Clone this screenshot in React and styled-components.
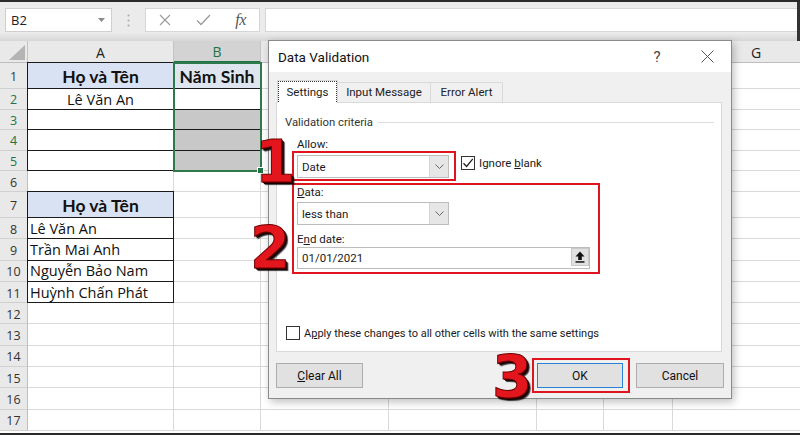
import React from 'react';
import styled, { createGlobalStyle, css } from 'styled-components';

const Global = createGlobalStyle`
  html, body { margin: 0; padding: 0; background: #fff; }
  body { width: 800px; height: 435px; overflow: hidden; font-family: "Open Sans", sans-serif; }
`;

const UI = `Roboto, "Noto Sans", sans-serif`;

const Frame = styled.div`
  position: relative;
  width: 800px;
  height: 435px;
  box-sizing: border-box;
  border-top: 2px solid #2a2a2a;
  border-bottom: 2px solid #2a2a2a;
  display: flex;
  flex-direction: column;
  overflow: hidden;
  background: #fff;
`;

/* ---------- toolbar ---------- */
const Toolbar = styled.div`
  height: 39px;
  flex: none;
  box-sizing: border-box;
  display: flex;
  align-items: flex-start;
  padding: 6px 0 0 5px;
  background: linear-gradient(#ebebeb 0, #ebebeb 31px, #d6d6d6 39px);
  border-right: 3px solid #333;
`;

const NameBox = styled.div`
  width: 107px;
  height: 24px;
  box-sizing: border-box;
  background: #fff;
  border: 1px solid #cfcfcf;
  display: flex;
  align-items: center;
  justify-content: space-between;
  padding: 0 6px 0 5px;
  font-size: 13px;
  color: #222;
`;

const Dots = styled.div`
  width: 33px;
  height: 24px;
  display: flex;
  align-items: center;
  justify-content: center;
`;

const FxBox = styled.div`
  width: 115px;
  height: 24px;
  box-sizing: border-box;
  background: #fff;
  border: 1px solid #d6d6d6;
  display: flex;
`;

const FxCell = styled.div`
  width: ${p => p.$w || 38}px;
  height: 100%;
  display: flex;
  align-items: center;
  justify-content: center;
  color: #666;
`;

const FxText = styled.span`
  font-family: "Liberation Serif", serif;
  font-style: italic;
  font-size: 16px;
  color: #555;
  letter-spacing: -0.5px;
`;

const FormulaInput = styled.div`
  flex: 1;
  height: 24px;
  margin-left: 5px;
  background: #fff;
  border: 1px solid #d6d6d6;
  border-right: none;
  box-sizing: border-box;
`;

/* ---------- sheet ---------- */
const Sheet = styled.div`
  position: relative;
  flex: 1;
  width: 840px;
  display: grid;
  grid-template-columns: 28px 146px 87px 128px 148px 67px 69px 167px;
  grid-template-rows: 22px 26px repeat(5, 20.6px) 26px repeat(11, 21.3px);
  overflow: hidden;
`;

const Corner = styled.div`
  background: #e9e9e9;
  border-right: 1px solid #c4c4c4;
  border-bottom: 1px solid #bdbdbd;
  box-sizing: border-box;
  display: flex;
  align-items: flex-end;
  justify-content: flex-end;
  padding: 0 2px 2px 0;
`;

const ColHead = styled.div`
  box-sizing: border-box;
  background: ${p => (p.$sel ? '#d3d3d3' : '#e9e9e9')};
  color: ${p => (p.$sel ? '#217346' : '#222')};
  border-right: 1px solid #c4c4c4;
  border-bottom: ${p => (p.$sel ? '2px solid #217346' : '1px solid #bdbdbd')};
  display: flex;
  align-items: center;
  justify-content: center;
  font-size: 14px;
  padding-top: 1px;
`;

const RowHead = styled.div`
  box-sizing: border-box;
  background: #e9e9e9;
  color: ${p => (p.$sel ? '#217346' : '#333')};
  border-right: 1px solid #bdbdbd;
  border-bottom: 1px solid #d0d0d0;
  display: flex;
  align-items: center;
  justify-content: center;
  font-size: 12.5px;
  padding-top: 2px;
`;

const Cell = styled.div`
  position: relative;
  box-sizing: border-box;
  border-right: 1px solid #d9d9d9;
  border-bottom: 1px solid #d9d9d9;
  background: ${p => p.$bg || '#fff'};
  font-family: ${p => (p.$bold ? 'Lato, "Open Sans", sans-serif' : '"Open Sans", sans-serif')};
  font-size: ${p => (p.$bold ? '17.5px' : '14.5px')};
  font-weight: ${p => (p.$bold ? 700 : 400)};
  line-height: 1;
  display: flex;
  align-items: center;
  justify-content: ${p => (p.$left ? 'flex-start' : 'center')};
  padding: 2px 2px 0 2px;
  color: #111;
  white-space: nowrap;
  ${p =>
    p.$boxed &&
    css`
      &::after {
        content: '';
        position: absolute;
        inset: -1px;
        border: 1px solid #1a1a1a;
        pointer-events: none;
      }
    `}
`;

const Selection = styled.div`
  position: absolute;
  left: 173px;
  top: 21px;
  width: 89px;
  height: 110px;
  box-sizing: border-box;
  border: 2px solid #2f7a4c;
  pointer-events: none;
`;

const FillHandle = styled.div`
  position: absolute;
  right: -4px;
  bottom: -4px;
  width: 5px;
  height: 5px;
  background: #217346;
  border: 1px solid #fff;
`;

/* ---------- dialog ---------- */
const Dialog = styled.div`
  position: absolute;
  left: 268px;
  top: 38px;
  width: 464px;
  height: 359px;
  box-sizing: border-box;
  border: 1px solid #8a8a8a;
  background: #f0f0f0;
  box-shadow: 2px 3px 8px rgba(0, 0, 0, 0.25);
  display: flex;
  flex-direction: column;
  font-family: ${UI};
  font-size: 11px;
  color: #1a1a1a;
`;

const TitleBar = styled.div`
  height: 31px;
  flex: none;
  background: #fff;
  display: flex;
  align-items: center;
  padding-left: 9px;
`;

const Title = styled.div`
  flex: 1;
  font-size: 13.5px;
  color: #111;
`;

const TitleBtn = styled.div`
  width: ${p => p.$w}px;
  margin-right: ${p => p.$mr || 0}px;
  height: 31px;
  display: flex;
  align-items: center;
  justify-content: center;
  color: #444;
  font-size: 15px;
`;

const Body = styled.div`
  flex: 1;
  display: flex;
  flex-direction: column;
  padding: 9px 9px 0 7px;
`;

const Tabs = styled.div`
  display: flex;
  align-items: flex-end;
  height: 22px;
  padding-left: 1px;
  position: relative;
  z-index: 1;
  margin-bottom: -1px;
`;

const Tab = styled.div`
  width: ${p => p.$w}px;
  height: ${p => (p.$active ? 23 : 21)}px;
  box-sizing: border-box;
  background: ${p => (p.$active ? '#fff' : '#f0f0f0')};
  border: 1px solid #d9d9d9;
  border-bottom: ${p => (p.$active ? 'none' : '1px solid #d9d9d9')};
  margin-left: ${p => (p.$first ? 0 : -1)}px;
  display: flex;
  align-items: center;
  justify-content: center;
  color: #222;
  padding-bottom: 1px;
  font-size: 11.5px;
`;

const FocusRect = styled.div`
  width: 100%;
  height: 100%;
  box-sizing: border-box;
  border: 1px dotted #333;
  border-bottom: none;
  display: flex;
  align-items: center;
  justify-content: center;
`;

const Panel = styled.div`
  height: 250px;
  box-sizing: border-box;
  background: #fff;
  border: 1px solid #d9d9d9;
  display: flex;
  flex-direction: column;
  padding: 12px 0 11px 0;
`;

const GroupHeader = styled.div`
  display: flex;
  align-items: center;
  padding-left: 8px;
  padding-right: 7px;
  height: 14px;
  color: #333;
  font-size: 11.3px;
`;

const GroupLine = styled.div`
  flex: 1;
  height: 1px;
  background: #dcdcdc;
  margin-left: 5px;
`;

const Group = styled.div`
  padding-left: 15px;
  margin-top: 8px;
  display: flex;
  flex-direction: column;
  align-items: flex-start;
`;

const Label = styled.div`
  height: 14px;
  line-height: 14px;
  margin-left: ${p => p.$ml ?? 5}px;
  margin-top: ${p => p.$mt || 0}px;
  color: #1a1a1a;
  font-size: 11.5px;
`;

const Row = styled.div`
  display: flex;
  align-items: flex-start;
`;

const Highlight = styled.div`
  border: 2px solid #e0141e;
  padding: ${p => p.$pad};
  width: ${p => (p.$w ? `${p.$w}px` : 'auto')};
  box-sizing: border-box;
  margin-top: ${p => p.$mt || 0}px;
  display: flex;
  flex-direction: column;
  align-items: flex-start;
`;

const Select = styled.div`
  width: ${p => p.$w}px;
  height: 23px;
  margin-top: ${p => p.$mt || 0}px;
  box-sizing: border-box;
  border: 1px solid #bcbcbc;
  background: #fff;
  display: flex;
  align-items: stretch;
  font-size: 11.5px;
`;

const SelectText = styled.div`
  flex: 1;
  display: flex;
  align-items: center;
  padding-left: 4px;
`;

const SelectBtn = styled.div`
  width: 18px;
  background: #e6e6e6;
  border-left: 1px solid #d4d4d4;
  display: flex;
  align-items: center;
  justify-content: center;
`;

const Input = styled.div`
  width: ${p => p.$w}px;
  height: 22px;
  margin-top: 1px;
  box-sizing: border-box;
  border: 1px solid #bcbcbc;
  background: #fff;
  display: flex;
  align-items: stretch;
  font-size: 11.5px;
`;

const InputText = styled.div`
  flex: 1;
  display: flex;
  align-items: center;
  padding-left: 4px;
`;

const RefBtn = styled.div`
  width: 18px;
  height: 18px;
  box-sizing: border-box;
  background: #e1e1e1;
  border: 1px solid #c8c8c8;
  display: flex;
  align-items: center;
  justify-content: center;
`;

const Check = styled.div`
  width: 14px;
  height: 14px;
  box-sizing: border-box;
  border: 1px solid #333;
  background: #fff;
  flex: none;
  display: flex;
  align-items: center;
  justify-content: center;
`;

const CheckRow = styled.label`
  display: flex;
  align-items: center;
  gap: 4px;
  margin-left: ${p => p.$ml || 0}px;
  margin-top: ${p => p.$mt || 0}px;
  font-size: ${p => p.$fs || 11.5}px;
`;

const Spacer = styled.div`
  flex: 1;
`;

const Footer = styled.div`
  display: flex;
  align-items: center;
  margin-top: 6px;
  margin-right: -2px;
  gap: 6px;
`;

const Button = styled.div`
  width: ${p => p.$w}px;
  height: 25px;
  box-sizing: border-box;
  background: #e1e1e1;
  border: 1px solid ${p => (p.$primary ? '#2a82d8' : '#adadad')};
  display: flex;
  align-items: center;
  justify-content: center;
  color: #111;
  font-size: 12px;
`;

/* ---------- annotations ---------- */
const Marker = styled.div`
  position: absolute;
  left: ${p => p.$x}px;
  top: ${p => p.$y}px;
  font-family: "DejaVu Sans", sans-serif;
  font-weight: 700;
  font-size: 58px;
  line-height: 1;
  color: #e3151d;
  -webkit-text-stroke: 1px #6a0000;
  text-shadow: 1px 1px 0 #2a0000, 2px 2px 0 #1a0000, 3px 3px 1px rgba(0, 0, 0, 0.75);
  pointer-events: none;
`;

/* ---------- icons ---------- */
const Chevron = () => (
  <svg width="9" height="5" viewBox="0 0 9 5">
    <path d="M0.5 0.5 L4.5 4.5 L8.5 0.5" stroke="#666" fill="none" />
  </svg>
);

const Tick = () => (
  <svg width="12" height="12" viewBox="0 0 12 12">
    <path d="M1.5 6.2 L4.6 9.4 L10.8 1.8" stroke="#222" strokeWidth="1.3" fill="none" />
  </svg>
);

const cols = ['A', 'B', 'C', 'D', 'E', 'F', 'G'];
const shownHeads = { A: 'A', B: 'B', G: 'G' };

const blue = '#d9e2f2';
const gray = '#c8c8c8';

const data = {
  1: { A: { t: 'Họ và Tên', bold: true, bg: blue, boxed: true }, B: { t: 'Năm Sinh', bold: true, bg: '#dfe5ef', boxed: true } },
  2: { A: { t: 'Lê Văn An', boxed: true }, B: { boxed: true } },
  3: { A: { boxed: true }, B: { boxed: true, bg: gray } },
  4: { A: { boxed: true }, B: { boxed: true, bg: gray } },
  5: { A: { boxed: true }, B: { boxed: true, bg: gray } },
  7: { A: { t: 'Họ và Tên', bold: true, bg: blue, boxed: true } },
  8: { A: { t: 'Lê Văn An', left: true, boxed: true } },
  9: { A: { t: 'Trần Mai Anh', left: true, boxed: true } },
  10: { A: { t: 'Nguyễn Bảo Nam', left: true, boxed: true } },
  11: { A: { t: 'Huỳnh Chấn Phát', left: true, boxed: true } },
};

export default function App() {
  const rows = Array.from({ length: 17 }, (_, i) => i + 1);
  return (
    <>
      <Global />
      <Frame>
        <Toolbar>
          <NameBox>
            <span>B2</span>
            <svg width="7" height="4" viewBox="0 0 7 4">
              <path d="M0 0 L7 0 L3.5 4Z" fill="#8a8a8a" />
            </svg>
          </NameBox>
          <Dots>
            <svg width="3" height="13" viewBox="0 0 3 13">
              <circle cx="1.5" cy="1.5" r="1" fill="#a8a8a8" />
              <circle cx="1.5" cy="6.5" r="1" fill="#a8a8a8" />
              <circle cx="1.5" cy="11.5" r="1" fill="#a8a8a8" />
            </svg>
          </Dots>
          <FxBox>
            <FxCell>
              <svg width="12" height="12" viewBox="0 0 12 12">
                <path d="M1 1 L11 11 M11 1 L1 11" stroke="#9a9a9a" strokeWidth="1.1" />
              </svg>
            </FxCell>
            <FxCell>
              <svg width="15" height="12" viewBox="0 0 15 12">
                <path d="M1 6.5 L5 10.5 L14 1" stroke="#9a9a9a" strokeWidth="1.3" fill="none" />
              </svg>
            </FxCell>
            <FxCell $w={37}>
              <FxText>fx</FxText>
            </FxCell>
          </FxBox>
          <FormulaInput />
        </Toolbar>

        <Sheet>
          <Corner>
            <svg width="16" height="15" viewBox="0 0 16 15">
              <path d="M16 0 L16 15 L0 15Z" fill="#b4b4b4" />
            </svg>
          </Corner>
          {cols.map(c => (
            <ColHead key={c} $sel={c === 'B'}>
              {shownHeads[c]}
            </ColHead>
          ))}
          {rows.map(r => (
            <React.Fragment key={r}>
              <RowHead $sel={r >= 2 && r <= 5}>{r}</RowHead>
              {cols.map(c => {
                const d = (data[r] && data[r][c]) || {};
                return (
                  <Cell key={c} $bg={d.bg} $bold={d.bold} $left={d.left} $boxed={d.boxed}>
                    {d.t}
                  </Cell>
                );
              })}
            </React.Fragment>
          ))}
          <Selection>
            <FillHandle />
          </Selection>
        </Sheet>

        <Dialog>
          <TitleBar>
            <Title>Data Validation</Title>
            <TitleBtn $w={30} $mr={12}>?</TitleBtn>
            <TitleBtn $w={46} $mr={1}>
              <svg width="13" height="13" viewBox="0 0 13 13">
                <path d="M0.5 0.5 L12.5 12.5 M12.5 0.5 L0.5 12.5" stroke="#555" strokeWidth="1" />
              </svg>
            </TitleBtn>
          </TitleBar>
          <Body>
            <Tabs>
              <Tab $w={61} $active $first>
                <FocusRect>Settings</FocusRect>
              </Tab>
              <Tab $w={94}>Input Message</Tab>
              <Tab $w={73}>Error Alert</Tab>
            </Tabs>
            <Panel>
              <GroupHeader>
                Validation criteria
                <GroupLine />
              </GroupHeader>
              <Group>
                <Label>Allow:</Label>
                <Row>
                  <Highlight $pad="2px 5px 1px 3px">
                    <Select $w={152}>
                      <SelectText>Date</SelectText>
                      <SelectBtn>
                        <Chevron />
                      </SelectBtn>
                    </Select>
                  </Highlight>
                  <CheckRow $ml={5} $mt={5}>
                    <Check>
                      <Tick />
                    </Check>
                    <span>
                      Ignore <u>b</u>lank
                    </span>
                  </CheckRow>
                </Row>
                <Highlight $pad="0 8px 3px 3px" $w={308} $mt={2}>
                  <Label $ml={0}>
                    <u>D</u>ata:
                  </Label>
                  <Select $w={152} $mt={3}>
                    <SelectText>less than</SelectText>
                    <SelectBtn>
                      <Chevron />
                    </SelectBtn>
                  </Select>
                  <Label $ml={0} $mt={7}>
                    E<u>n</u>d date:
                  </Label>
                  <Input $w={293}>
                    <InputText>01/01/2021</InputText>
                    <RefBtn>
                      <svg width="10" height="12" viewBox="0 0 10 12">
                        <path d="M5 0.5 L9.5 5.5 L6.8 5.5 L6.8 9 L3.2 9 L3.2 5.5 L0.5 5.5Z" fill="#111" />
                        <rect x="0.5" y="10.2" width="9" height="1.5" fill="#111" />
                      </svg>
                    </RefBtn>
                  </Input>
                </Highlight>
              </Group>
              <Spacer />
              <CheckRow $ml={9} $fs={11}>
                <Check />
                <span>
                  A<u>p</u>ply these changes to all other cells with the same settings
                </span>
              </CheckRow>
            </Panel>
            <Footer>
              <Button $w={87}>
                <span>
                  <u>C</u>lear All
                </span>
              </Button>
              <Spacer />
              <Highlight $pad="3px 5px 3px 3px">
                <Button $w={86} $primary>
                  OK
                </Button>
              </Highlight>
              <Button $w={88}>Cancel</Button>
            </Footer>
          </Body>
        </Dialog>

        <Marker $x={255} $y={131}>1</Marker>
        <Marker $x={250} $y={217}>2</Marker>
        <Marker $x={492} $y={346}>3</Marker>
      </Frame>
    </>
  );
}
